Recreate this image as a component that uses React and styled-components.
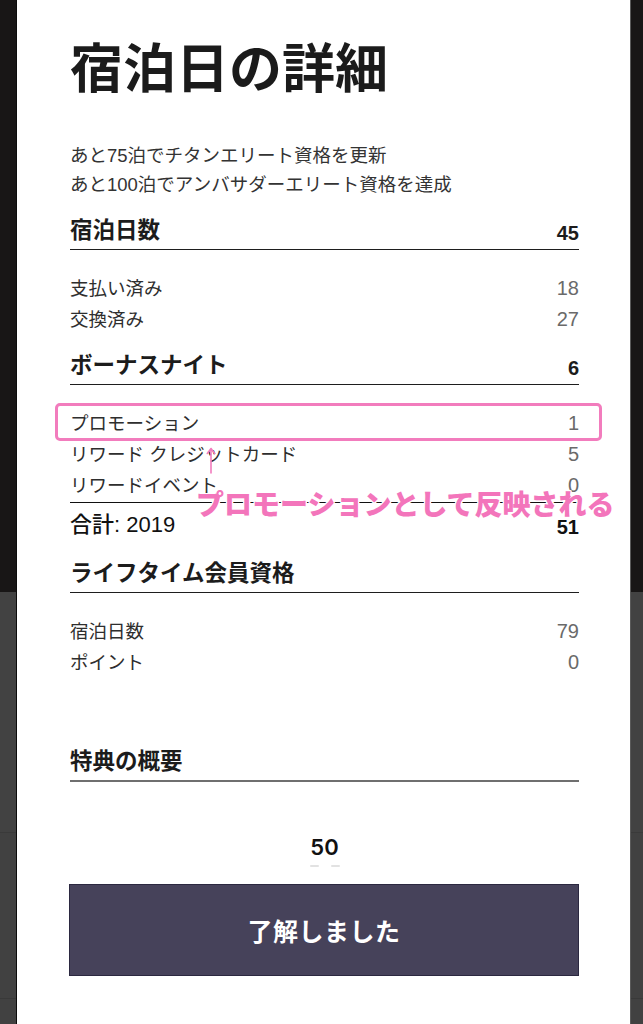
import React from 'react';
import styled, { createGlobalStyle } from 'styled-components';

const GlobalStyle = createGlobalStyle`
  body {
    margin: 0;
    font-family: "Liberation Sans", "Noto Sans CJK JP", sans-serif;
    -webkit-font-smoothing: antialiased;
  }
`;

const Page = styled.div`
  box-sizing: border-box;
  height: 1024px;
  padding: 0 12px 0 16px;
  overflow: hidden;
  background: linear-gradient(
    #181616 0 592px,
    #424242 592px 832px,
    #3a3a3a 832px 833px,
    #414141 833px 998px,
    #393939 998px 999px,
    #414141 999px
  );
`;

const Sheet = styled.div`
  box-sizing: border-box;
  height: 1024px;
  background: #fff;
  border-left: 1px solid #0c0c0c;
  border-right: 1px solid #5a5a5a;
  padding: 32px 51px 0 53px;
  position: relative;
  overflow: hidden;
`;

const Title = styled.h1`
  margin: 0;
  font-family: "Noto Sans CJK JP", sans-serif;
  font-size: 53px;
  line-height: 66px;
  font-weight: 700;
  color: #1b1b1b;
`;

const Intro = styled.div`
  margin-top: 42.5px;
  font-size: 18.5px;
  line-height: 29px;
  color: #333;
`;

const Section = styled.section`
  margin-top: ${({ $gap }) => $gap}px;
`;

const Header = styled.div`
  display: flex;
  justify-content: space-between;
  align-items: baseline;
  padding-bottom: 4px;
  border-bottom: ${({ $soft }) => ($soft ? '2px solid #6f6f6f' : '1.5px solid #1e1e1e')};
  font-size: 22.5px;
  line-height: 28px;
  font-weight: 700;
  color: #1c1c1c;
`;

const HeaderValue = styled.span`
  font-size: 20px;
  font-weight: 700;
  position: relative;
  top: 2px;
`;

const Rows = styled.div`
  margin-top: 23px;
`;

const Row = styled.div`
  display: flex;
  justify-content: space-between;
  align-items: baseline;
  position: relative;
  font-size: 18.5px;
  line-height: 31px;
  color: #2e2e2e;
`;

const RowValue = styled.span`
  font-size: 20px;
  color: #6a6a6a;
`;

const Total = styled.div`
  display: flex;
  justify-content: space-between;
  align-items: baseline;
  margin-top: 1px;
  padding-top: 8.5px;
  border-top: 1.5px solid #111;
  font-size: 22px;
  line-height: 28px;
  font-weight: 500;
  color: #111;
`;

const TotalValue = styled.span`
  font-size: 20px;
  font-weight: 700;
  position: relative;
  top: 2px;
`;

const Highlight = styled.div`
  position: absolute;
  left: -15px;
  right: -23px;
  top: -4.5px;
  bottom: -2.5px;
  border: 3px solid #f27cbd;
  border-radius: 5px;
  pointer-events: none;
`;

const Arrow = styled.svg`
  position: absolute;
  left: 136px;
  top: 39px;
  z-index: 2;
`;

const Callout = styled.div`
  position: absolute;
  left: 126px;
  top: 79px;
  z-index: 2;
  white-space: nowrap;
  font-family: "Noto Sans CJK JP", sans-serif;
  font-size: 28px;
  line-height: 32px;
  font-weight: 900;
  color: #f375bb;
  text-shadow: 1px 0 0 #fff, -1px 0 0 #fff, 0 1px 0 #fff, 0 -1px 0 #fff,
    1px 1px 0 #fff, -1px -1px 0 #fff, 1px -1px 0 #fff, -1px 1px 0 #fff;
`;

const Amount = styled.div`
  margin-top: 50.5px;
  text-align: center;
  font-family: Inter, "Liberation Sans", sans-serif;
  font-size: 22px;
  line-height: 30px;
  font-weight: 600;
  color: #111;
`;

const Faded = styled.div`
  display: flex;
  justify-content: center;
  gap: 12px;
  margin-top: 2px;
  height: 4px;
  align-items: center;
`;

const Dash = styled.span`
  width: 9px;
  height: 2px;
  border-radius: 1px;
  background: #e2e2e2;
`;

const Button = styled.button`
  display: block;
  box-sizing: border-box;
  width: calc(100% + 1px);
  margin: 16px 0 0 -1px;
  height: 92px;
  background: #46425a;
  border: 1px solid #2b2840;
  color: #fff;
  font-family: "Noto Sans CJK JP", sans-serif;
  font-size: 25px;
  font-weight: 700;
  letter-spacing: 0.5px;
  cursor: pointer;
`;

const App = () => {
  return (
    <Page>
      <GlobalStyle />
      <Sheet>
        <Title>宿泊日の詳細</Title>
        <Intro>
          <div>あと75泊でチタンエリート資格を更新</div>
          <div>あと100泊でアンバサダーエリート資格を達成</div>
        </Intro>

        <Section $gap={18.5}>
          <Header>
            <span>宿泊日数</span>
            <HeaderValue>45</HeaderValue>
          </Header>
          <Rows>
            <Row><span>支払い済み</span><RowValue>18</RowValue></Row>
            <Row><span>交換済み</span><RowValue>27</RowValue></Row>
          </Rows>
        </Section>

        <Section $gap={16.5}>
          <Header>
            <span>ボーナスナイト</span>
            <HeaderValue>6</HeaderValue>
          </Header>
          <Rows>
            <Row>
              <span>プロモーション</span>
              <RowValue>1</RowValue>
              <Highlight />
              <Arrow width="10" height="27" viewBox="0 0 10 27">
                <path d="M5 26V2M1.3 6.5L5 1.5l3.7 5" fill="none" stroke="#f27cbd" strokeWidth="1.6" strokeLinecap="round" strokeLinejoin="round" />
              </Arrow>
              <Callout>プロモーションとして反映される</Callout>
            </Row>
            <Row><span>リワード クレジットカード</span><RowValue>5</RowValue></Row>
            <Row><span>リワードイベント</span><RowValue>0</RowValue></Row>
          </Rows>
          <Total>
            <span>合計: 2019</span>
            <TotalValue>51</TotalValue>
          </Total>
        </Section>

        <Section $gap={21}>
          <Header>
            <span>ライフタイム会員資格</span>
          </Header>
          <Rows>
            <Row><span>宿泊日数</span><RowValue>79</RowValue></Row>
            <Row><span>ポイント</span><RowValue>0</RowValue></Row>
          </Rows>
        </Section>

        <Section $gap={69.5}>
          <Header $soft>
            <span>特典の概要</span>
          </Header>
        </Section>

        <Amount>50</Amount>
        <Faded>
          <Dash />
          <Dash />
        </Faded>
        <Button>了解しました</Button>
      </Sheet>
    </Page>
  );
};

export default App;
